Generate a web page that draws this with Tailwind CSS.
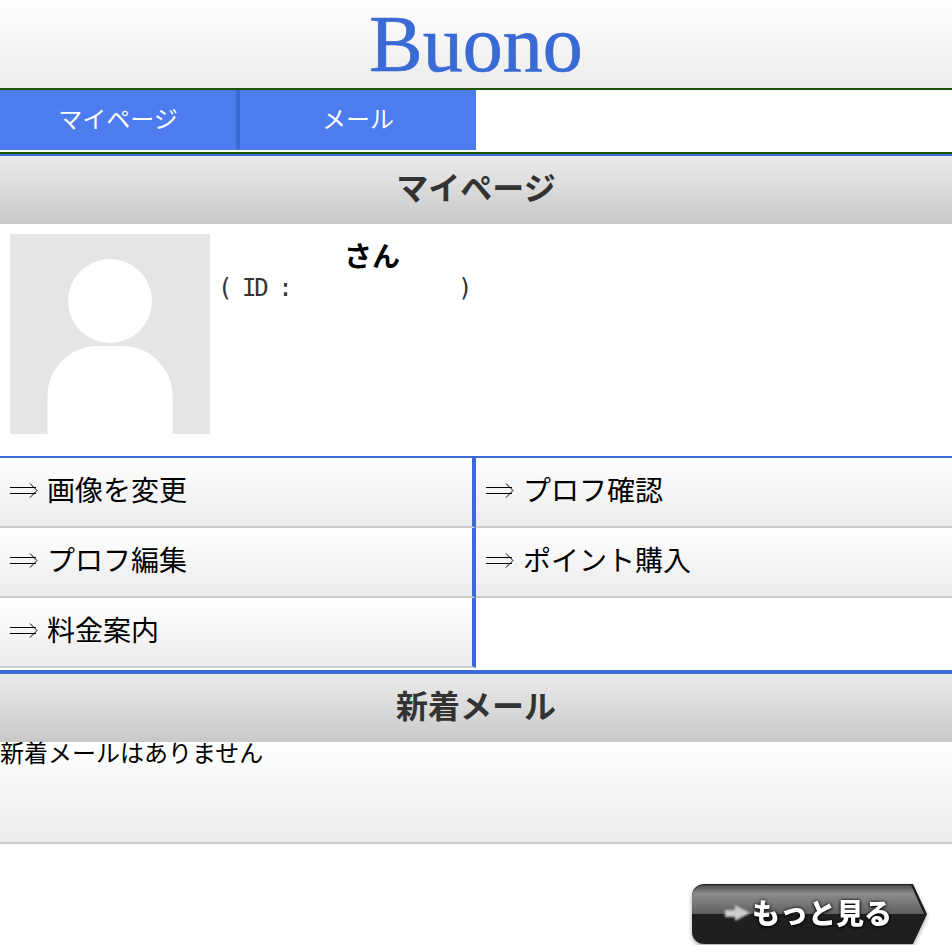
<!DOCTYPE html>
<html>

<head>
  <meta charset="utf-8" />
  <title>Buono</title>
  <script src="https://cdn.jsdelivr.net/npm/@tailwindcss/browser@4"></script>
</head>

<body class="bg-white font-['Noto_Sans_CJK_JP','Noto_Sans_CJK_SC',sans-serif] text-black">
  <header class="h-[88px] flex justify-center bg-gradient-to-b from-white to-[#ebebeb]">
    <span class="font-['Liberation_Serif',serif] text-[80px] leading-[88px] text-[#3a6bd4] [-webkit-text-stroke:0.7px_#3a6bd4] blur-[0.6px]">Buono</span>
  </header>

  <nav class="border-t-2 border-[#1a5200] h-[62px] border-b-2 box-content flex items-start">
    <a class="w-[240px] h-[60px] bg-[#4c7cee] border-r-4 border-[#3a6bd4] text-white text-[24px] font-normal leading-[56px] text-center">マイページ</a>
    <a class="w-[236px] h-[60px] bg-[#4c7cee] text-white text-[24px] font-normal leading-[56px] text-center">メール</a>
  </nav>

  <section class="border-t-2 border-[#3a6bd4]">
    <h2 class="h-[68px] bg-gradient-to-b from-[#ebebeb] to-[#c9c9c9] text-[32px] font-bold text-[#333] leading-[60px] text-center">マイページ</h2>
    <div class="h-[232px] flex pl-[10px] pt-[10px]">
      <svg class="w-[200px] h-[200px] bg-[#e5e5e5]" viewBox="0 0 200 200">
        <circle cx="100" cy="67" r="42" fill="#fff" />
        <path d="M37.500 200V162A50 50 0 0 1 87.500 112H112.500A50 50 0 0 1 162.500 162V200Z" fill="#fff" />
      </svg>
      <div class="w-[260px]">
        <p class="pl-[134px] pt-[1px] text-[28px] font-bold leading-[40px]">さん</p>
        <p class="flex justify-between pl-[8px] pt-[1px] font-['DejaVu_Sans_Mono',monospace] text-[24px] leading-[24px] tracking-[-2.4px] text-[#333]"><span>( ID :</span><span>)</span></p>
      </div>
    </div>

    <div class="border-t-2 border-[#3a6bd4] grid grid-cols-2">
      <a class="h-[70px] flex items-start border-r-4 border-b-2 border-r-[#3a6bd4] border-b-[#ccc] bg-gradient-to-b from-white to-[#ebebeb] pl-[9px] text-[28px] leading-[62px]"><svg class="w-[38px] h-[16px] mt-[25px] shrink-0" viewBox="0 0 38 16" fill="none" stroke="#000" stroke-width="1"><path d="M1 4.500H27M1 10.500H27M21 0.500L28 7.500L21 14.500" /></svg>画像を変更</a>
      <a class="h-[70px] flex items-start border-b-2 border-b-[#ccc] bg-gradient-to-b from-white to-[#ebebeb] pl-[9px] text-[28px] leading-[62px]"><svg class="w-[38px] h-[16px] mt-[25px] shrink-0" viewBox="0 0 38 16" fill="none" stroke="#000" stroke-width="1"><path d="M1 4.500H27M1 10.500H27M21 0.500L28 7.500L21 14.500" /></svg>プロフ確認</a>
      <a class="h-[70px] flex items-start border-r-4 border-b-2 border-r-[#3a6bd4] border-b-[#ccc] bg-gradient-to-b from-white to-[#ebebeb] pl-[9px] text-[28px] leading-[62px]"><svg class="w-[38px] h-[16px] mt-[25px] shrink-0" viewBox="0 0 38 16" fill="none" stroke="#000" stroke-width="1"><path d="M1 4.500H27M1 10.500H27M21 0.500L28 7.500L21 14.500" /></svg>プロフ編集</a>
      <a class="h-[70px] flex items-start border-b-2 border-b-[#ccc] bg-gradient-to-b from-white to-[#ebebeb] pl-[9px] text-[28px] leading-[62px]"><svg class="w-[38px] h-[16px] mt-[25px] shrink-0" viewBox="0 0 38 16" fill="none" stroke="#000" stroke-width="1"><path d="M1 4.500H27M1 10.500H27M21 0.500L28 7.500L21 14.500" /></svg>ポイント購入</a>
      <a class="h-[70px] flex items-start border-r-4 border-b-2 border-r-[#3a6bd4] border-b-[#ccc] bg-gradient-to-b from-white to-[#ebebeb] pl-[9px] text-[28px] leading-[62px]"><svg class="w-[38px] h-[16px] mt-[25px] shrink-0" viewBox="0 0 38 16" fill="none" stroke="#000" stroke-width="1"><path d="M1 4.500H27M1 10.500H27M21 0.500L28 7.500L21 14.500" /></svg>料金案内</a>
      <div></div>
    </div>
  </section>

  <section class="mt-[2px] border-t-4 border-[#3a6bd4]">
    <h2 class="h-[68px] bg-gradient-to-b from-[#ebebeb] to-[#c9c9c9] text-[32px] font-bold text-[#333] leading-[60px] text-center">新着メール</h2>
    <div class="h-[102px] border-b-2 border-[#ccc] bg-gradient-to-b from-white to-[#ebebeb] text-[24px] leading-[20px]">新着メールはありません</div>
  </section>

  <div class="flex justify-end pt-[40px] pr-[25px]">
    <a class="relative w-[235px] h-[61px] drop-shadow-[0_2px_2px_rgba(0,0,0,0.35)]">
      <svg class="absolute inset-0" width="235" height="61" viewBox="0 0 235 61">
        <defs>
          <linearGradient id="btnTop" x1="0" y1="0" x2="0" y2="1">
            <stop offset="0" stop-color="#4a4a4a" />
            <stop offset="0.3" stop-color="#8c8c8c" />
            <stop offset="1" stop-color="#5e5e5e" />
          </linearGradient>
        </defs>
        <path d="M12 0H221L235 30L221 60H12A12 12 0 0 1 0 48V12A12 12 0 0 1 12 0Z" fill="#1f1f1f" />
        <path d="M12 1H219L232 30H0V12A12 12 0 0 1 12 1Z" fill="url(#btnTop)" />
        <path d="M33 26H43V21L58 29L43 37V33H33Z" fill="#ccc" class="blur-[1px]" />
      </svg>
      <span class="absolute left-[60px] top-[5px] text-[28px] font-black leading-[46px] text-white [text-shadow:0_0_3px_#000,0_1px_3px_#000]">もっと見る</span>
    </a>
  </div>
</body>

</html>
